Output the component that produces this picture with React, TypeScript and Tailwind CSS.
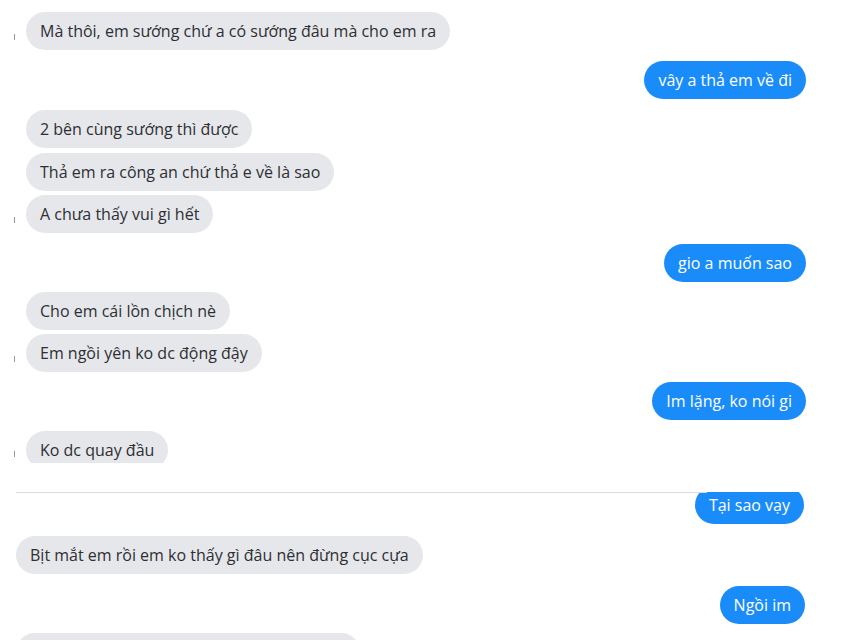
import React from "react";

type Msg = { text: string; mine?: boolean; mt: number; tick?: boolean };

const top: Msg[] = [
  { text: "Mà thôi, em sướng chứ a có sướng đâu mà cho em ra", mt: 12, tick: true },
  { text: "vây a thả em về đi", mine: true, mt: 11 },
  { text: "2 bên cùng sướng thì được", mt: 11 },
  { text: "Thả em ra công an chứ thả e về là sao", mt: 5 },
  { text: "A chưa thấy vui gì hết", mt: 4, tick: true },
  { text: "gio a muốn sao", mine: true, mt: 11 },
  { text: "Cho em cái lồn chịch nè", mt: 10 },
  { text: "Em ngồi yên ko dc động đậy", mt: 4, tick: true },
  { text: "Im lặng, ko nói gi", mine: true, mt: 10 },
];

const Bubble = ({ text, mine }: { text: string; mine?: boolean }) => (
  <div
    className={`h-[38px] shrink-0 rounded-[19px] px-[14px] flex items-center text-[16px] whitespace-nowrap ${
      mine ? "bg-[#1a8cfa] text-white" : "bg-[#e6e7eb] text-[#2d2f33]"
    }`}
  >
    {text}
  </div>
);

const Row = ({ m }: { m: Msg }) => (
  <div
    className={`flex items-end ${m.mine ? "justify-end pr-[41px]" : "pl-[26px]"}`}
    style={{ marginTop: m.mt }}
  >
    {!m.mine && (
      <span
        className={`absolute ml-[-12px] mb-[10px] w-px h-[6px] ${m.tick ? "bg-[#9a9a9a]" : "bg-transparent"}`}
      />
    )}
    <Bubble text={m.text} mine={m.mine} />
  </div>
);

export default function App() {
  return (
    <div
      className="w-[847px] h-[640px] overflow-hidden bg-white"
      style={{ fontFamily: '"Open Sans", "Noto Sans", sans-serif' }}
    >
      {top.map((m, i) => (
        <Row key={i} m={m} />
      ))}
      {/* cut-off bubble at the end of the first capture */}
      <div className="mt-[11px] h-[32px] overflow-hidden pl-[26px] flex items-start">
        <span className="absolute ml-[-12px] mt-[20px] w-px h-[6px] bg-[#9a9a9a]" />
        <Bubble text="Ko dc quay đầu" />
      </div>
      <div className="mt-[29px] relative h-[32px] overflow-hidden flex justify-end pr-[43px]">
        <div className="absolute left-[16px] right-[140px] top-0 h-px bg-[#dcdcdc]" />
        <div className="-mt-[6px]">
          <Bubble text="Tại sao vạy" mine />
        </div>
      </div>
      <div className="mt-[12px] pl-[16px] flex">
        <Bubble text="Bịt mắt em rồi em ko thấy gì đâu nên đừng cục cựa" />
      </div>
      <div className="mt-[12px] flex justify-end pr-[42px]">
        <Bubble text="Ngồi im" mine />
      </div>
      <div className="mt-[9px] pl-[16px] flex">
        <div className="h-[38px] w-[344px] rounded-[19px] bg-[#e6e7eb]" />
      </div>
    </div>
  );
}
